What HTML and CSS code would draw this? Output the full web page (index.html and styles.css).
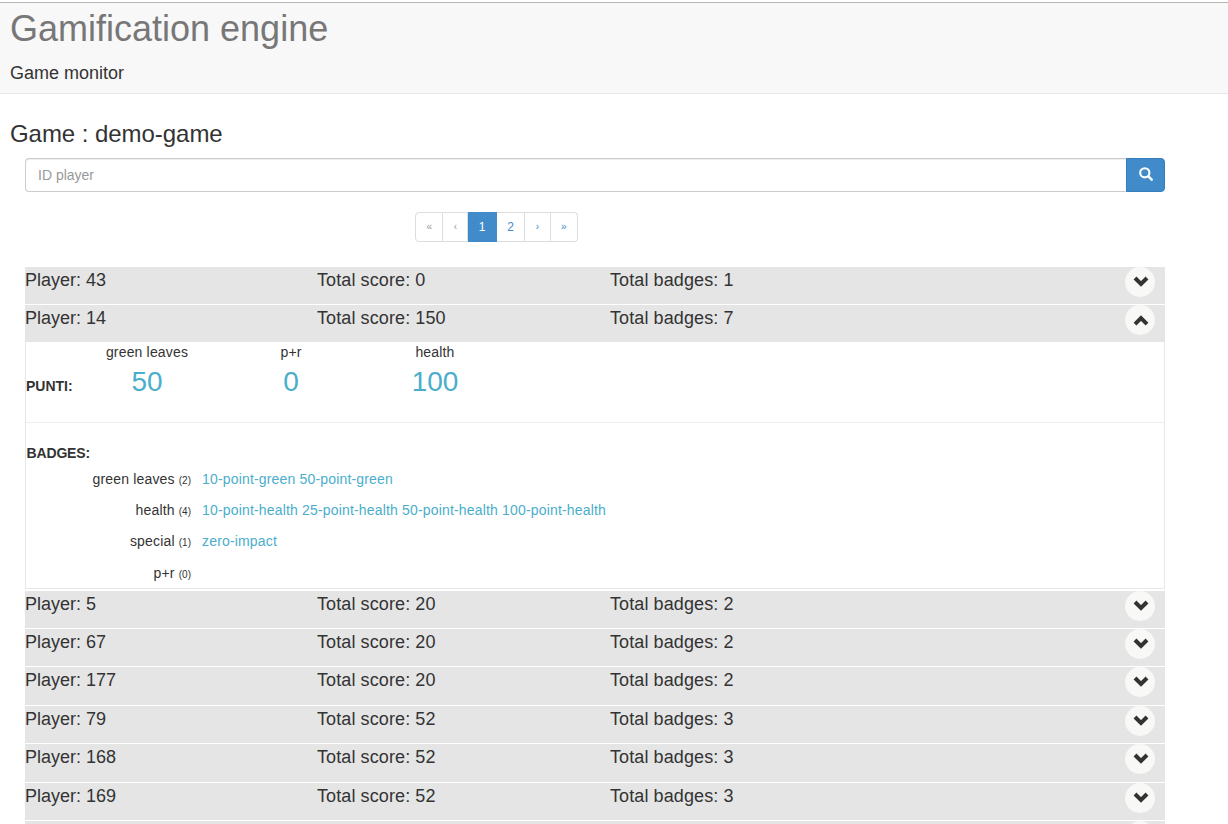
FILE: index.html
```html
<!DOCTYPE html>
<html lang="en">
<head>
    <meta charset="UTF-8">
    <title>Game monitor</title>
    <link rel="stylesheet" href="styles.css">
</head>
<body>
    <nav class="navbar">
        <div class="brand">Gamification engine</div>
        <div class="nav-link">Game monitor</div>
    </nav>
    <h2 class="game-title">Game : demo-game</h2>
    <div class="content">
        <form class="search">
            <input type="text" class="search-input" placeholder="ID player">
            <button type="button" class="search-btn">
                <svg width="14" height="14" viewBox="0 0 14 14"><circle cx="5.8" cy="5.8" r="4.6" fill="none" stroke="#fff" stroke-width="2.1"/><path d="M9.4 9.4 L12.7 12.7" stroke="#fff" stroke-width="2.4" stroke-linecap="round"/></svg>
            </button>
        </form>
        <ul class="pagination">
            <li class="muted">«</li>
            <li class="muted">‹</li>
            <li class="num active">1</li>
            <li class="num">2</li>
            <li>›</li>
            <li>»</li>
        </ul>

        <div class="players">
            <div class="row"><span>Player: 43</span><span>Total score: 0</span><span>Total badges: 1</span><a class="toggle"><svg width="16" height="12" viewBox="0 0 16 12"><path d="M2 2 L8 8 L14 2" /></svg></a></div>
            <div class="row"><span>Player: 14</span><span>Total score: 150</span><span>Total badges: 7</span><a class="toggle"><svg width="16" height="12" viewBox="0 0 16 12"><path d="M2 10.2 L8 4.2 L14 10.2" /></svg></a></div>
            <div class="detail">
                <div class="punti">
                    <strong class="punti-label">PUNTI:</strong>
                    <div class="score"><div class="score-name">green leaves</div><div class="score-value">50</div></div>
                    <div class="score"><div class="score-name">p+r</div><div class="score-value">0</div></div>
                    <div class="score"><div class="score-name">health</div><div class="score-value">100</div></div>
                </div>
                <div class="badges">
                    <strong class="badges-label">BADGES:</strong>
                    <div class="badge-row"><div class="badge-name">green leaves <small>(2)</small></div><div class="badge-list">10-point-green 50-point-green</div></div>
                    <div class="badge-row"><div class="badge-name">health <small>(4)</small></div><div class="badge-list">10-point-health 25-point-health 50-point-health 100-point-health</div></div>
                    <div class="badge-row"><div class="badge-name">special <small>(1)</small></div><div class="badge-list">zero-impact</div></div>
                    <div class="badge-row"><div class="badge-name">p+r <small>(0)</small></div><div class="badge-list"></div></div>
                </div>
            </div>
            <div class="row"><span>Player: 5</span><span>Total score: 20</span><span>Total badges: 2</span><a class="toggle"><svg width="16" height="12" viewBox="0 0 16 12"><path d="M2 2 L8 8 L14 2" /></svg></a></div>
            <div class="row"><span>Player: 67</span><span>Total score: 20</span><span>Total badges: 2</span><a class="toggle"><svg width="16" height="12" viewBox="0 0 16 12"><path d="M2 2 L8 8 L14 2" /></svg></a></div>
            <div class="row"><span>Player: 177</span><span>Total score: 20</span><span>Total badges: 2</span><a class="toggle"><svg width="16" height="12" viewBox="0 0 16 12"><path d="M2 2 L8 8 L14 2" /></svg></a></div>
            <div class="row"><span>Player: 79</span><span>Total score: 52</span><span>Total badges: 3</span><a class="toggle"><svg width="16" height="12" viewBox="0 0 16 12"><path d="M2 2 L8 8 L14 2" /></svg></a></div>
            <div class="row"><span>Player: 168</span><span>Total score: 52</span><span>Total badges: 3</span><a class="toggle"><svg width="16" height="12" viewBox="0 0 16 12"><path d="M2 2 L8 8 L14 2" /></svg></a></div>
            <div class="row"><span>Player: 169</span><span>Total score: 52</span><span>Total badges: 3</span><a class="toggle"><svg width="16" height="12" viewBox="0 0 16 12"><path d="M2 2 L8 8 L14 2" /></svg></a></div>
            <div class="row"><span></span><span></span><span></span><a class="toggle"></a></div>
        </div>
    </div>
</body>
</html>
```

FILE: styles.css
```css
html, body {
    height: 824px;
    overflow: hidden;
}

body {
    margin: 0;
    font-family: 'Liberation Sans', Arial, sans-serif;
    font-size: 14px;
    line-height: 20px;
    color: #333;
    background: #fff;
}

.navbar {
    height: 90px;
    margin-top: 2px;
    padding: 0 10px;
    background: #f8f8f8;
    border-top: 1px solid #b8b6b0;
    border-bottom: 1px solid #e7e7e7;
}

.brand {
    padding-top: 1px;
    font-size: 36px;
    line-height: 50px;
    color: #777;
}

.nav-link {
    margin-top: 6px;
    font-size: 18px;
    line-height: 26px;
}

.game-title {
    margin: 27px 10px 11px;
    font-size: 24px;
    font-weight: 500;
    line-height: 26px;
    letter-spacing: -0.05px;
}

.content {
    width: 1140px;
    margin-left: 25px;
}

.search {
    display: flex;
    height: 34px;
}

.search-input {
    flex: 1;
    box-sizing: border-box;
    height: 34px;
    padding: 6px 12px;
    font: inherit;
    color: #555;
    border: 1px solid #ccc;
    border-right: none;
    border-radius: 4px 0 0 4px;
    outline: none;
    box-shadow: inset 0 1px 1px rgba(0, 0, 0, 0.075);
}

.search-input::placeholder {
    color: #999;
}

.search-btn {
    width: 39px;
    padding: 0;
    background: #428bca;
    border: 1px solid #357ebd;
    border-radius: 0 4px 4px 0;
}

.pagination {
    display: flex;
    width: max-content;
    margin: 20px 0 24.6px 390px;
    padding: 0;
    list-style: none;
    font-size: 10px;
    line-height: 28px;
    color: #428bca;
    background: #fff;
}

.pagination li {
    height: 28px;
    padding: 0 10.4px;
    text-align: center;
    border: 1px solid #ddd;
    border-left: none;
}

.pagination li:first-child {
    border-left: 1px solid #ddd;
    border-radius: 4px 0 0 4px;
}

.pagination li:last-child {
    border-radius: 0 4px 4px 0;
}

.pagination .muted {
    color: #999;
}

.pagination .num {
    font-size: 12px;
}

.pagination .active {
    color: #fff;
    background: #428bca;
    border-color: #428bca;
}

.row {
    display: grid;
    grid-template-columns: 292px 293px 1fr 30px;
    box-sizing: border-box;
    height: 37.4px;
    margin-bottom: 1px;
    padding-right: 10px;
    font-size: 18px;
    line-height: 26px;
    background: #e5e5e5;
}

.row span + span {
    letter-spacing: 0.1px;
}

.toggle {
    display: flex;
    align-items: center;
    justify-content: center;
    width: 30px;
    height: 30px;
    background: #f8f8f6;
    border-radius: 50%;
}

.toggle svg {
    margin-left: 1px;
}

.toggle path {
    fill: none;
    stroke: #333;
    stroke-width: 4;
}

.detail {
    height: 245.8px;
    margin-top: -1.6px;
    margin-bottom: 2px;
    border: 1px solid #e7e7e7;
    border-top: none;
}

.punti {
    display: flex;
    height: 80px;
    border-bottom: 1px solid #eee;
}

.punti-label {
    width: 49px;
    margin-top: 34px;
    font-size: 14px;
}

.score {
    width: 144px;
    text-align: center;
}

.score-name {
    letter-spacing: 0.17px;
}

.score-value {
    font-size: 28px;
    line-height: 40px;
    color: #4aaecb;
}

.badges {
    padding-top: 20px;
}

.badges-label {
    display: block;
    padding-left: 0.5px;
    font-size: 14px;
    letter-spacing: -0.15px;
    margin-bottom: 6px;
}

.badge-row {
    display: flex;
    height: 31px;
    line-height: 20px;
}

.badge-row:last-child {
    padding-top: 1px;
}

.badge-name {
    width: 165px;
    text-align: right;
    letter-spacing: 0.17px;
}

.badge-name small {
    font-size: 10px;
    letter-spacing: 0;
}

.badge-list {
    margin-left: 11px;
    letter-spacing: 0.17px;
    color: #4aaecb;
}
```
